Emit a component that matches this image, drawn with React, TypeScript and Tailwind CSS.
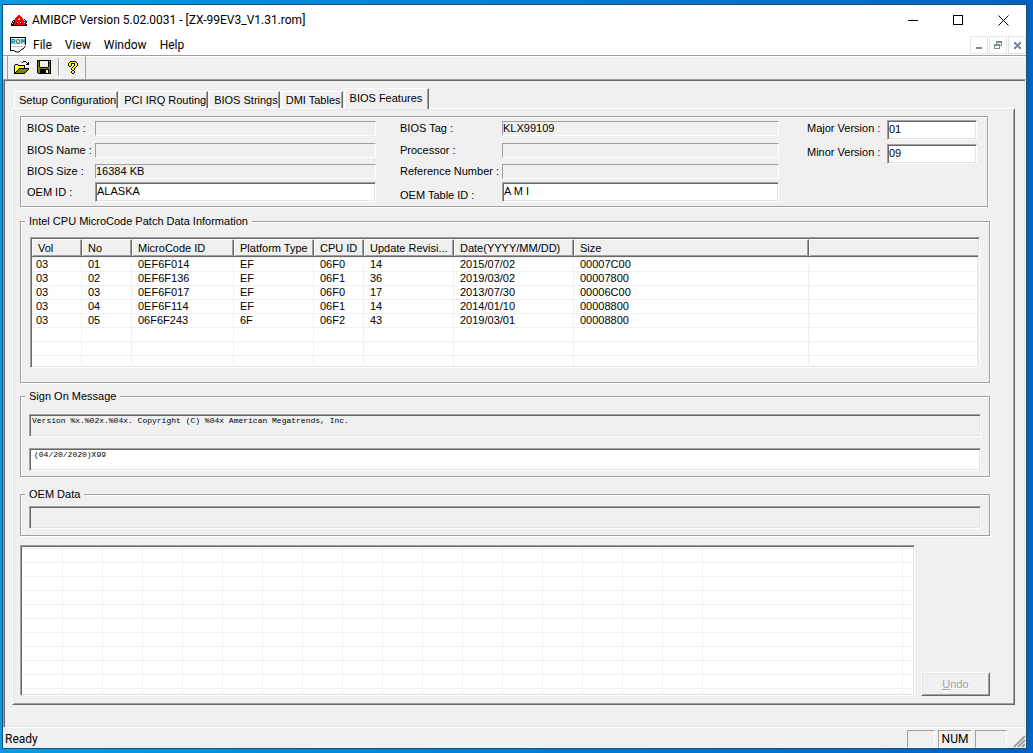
import { useState, type ReactNode } from "react";
import clsx from "clsx";

const sunken =
  "border border-t-[#a0a0a0] border-l-[#a0a0a0] border-r-white border-b-white shadow-[inset_1px_1px_0_#696969,inset_-1px_-1px_0_#e3e3e3]";
const thin =
  "border border-t-[#a0a0a0] border-l-[#a0a0a0] border-r-white border-b-white";
const etched =
  "border border-[#a0a0a0] shadow-[inset_1px_1px_0_#fff,1px_1px_0_#fff]";

const tabs = [
  "Setup Configuration",
  "PCI IRQ Routing",
  "BIOS Strings",
  "DMI Tables",
  "BIOS Features",
];

const columns = [
  { name: "Vol", width: "w-[50px]" },
  { name: "No", width: "w-[50px]" },
  { name: "MicroCode ID", width: "w-[102px]" },
  { name: "Platform Type", width: "w-[80px]" },
  { name: "CPU ID", width: "w-[50px]" },
  { name: "Update Revisi...", width: "w-[90px]" },
  { name: "Date(YYYY/MM/DD)", width: "w-[120px]" },
  { name: "Size", width: "w-[235px]" },
];

const patches = [
  ["03", "01", "0EF6F014", "EF", "06F0", "14", "2015/07/02", "00007C00"],
  ["03", "02", "0EF6F136", "EF", "06F1", "36", "2019/03/02", "00007800"],
  ["03", "03", "0EF6F017", "EF", "06F0", "17", "2013/07/30", "00006C00"],
  ["03", "04", "0EF6F114", "EF", "06F1", "14", "2014/01/10", "00008800"],
  ["03", "05", "06F6F243", "6F", "06F2", "43", "2019/03/01", "00008800"],
];

const palette: Record<string, string> = {
  "#": "#000000",
  O: "#808000",
  Y: "#ffff00",
  W: "#ffffff",
  R: "#ff0000",
  G: "#808080",
  B: "#7a8a99",
};

const openIcon = [
  ".........###....",
  "........#...#.#.",
  ".............##.",
  ".###........###.",
  "#YWY#######.....",
  "#WYWYWYWYW#.....",
  "#YWYWYWYWY#.....",
  "#WYWY##########.",
  "#YWY#OOOOOOOOO#.",
  "#WY#OOOOOOOOO#..",
  "#Y#OOOOOOOOO#...",
  "##OOOOOOOOO#....",
  "###########.....",
];

const saveIcon = [
  "##############",
  "#O#........#.#",
  "#O#........###",
  "#O#........#O#",
  "#O#........#O#",
  "#O#........#O#",
  "#O#........#O#",
  "#OO########OO#",
  "#OOOOOOOOOOOO#",
  "#OO#########O#",
  "#OO######..#O#",
  "#OO######..#O#",
  "#OO######..#O#",
  ".#############",
];

const helpIcon = [
  "..######..",
  ".#YYYYYY#.",
  "#YY####YY#",
  "#YY#..#YY#",
  "#YY#..#YY#",
  ".##..#YY#.",
  "....#YY#..",
  "...#YY#...",
  "...#YY#...",
  "....##....",
  "...#YY#...",
  "...#YY#...",
  "....##....",
];

const logoIcon = [
  ".......RR.......",
  "......RRRR......",
  ".....RRRRRR.....",
  "....RRRR.RRR....",
  "....RRR..RRR.#..",
  "..##RRRRRRRRR.#.",
  ".#.#RR#RR#RRR#G#",
  ".##RRR.RR.RRR.##",
  "#.#RR#RRRR#RRR#.",
  "###RRRRRRRRRRR##",
  "################",
];

const restoreIcon = [
  "..BBBBBB",
  "..BBBBBB",
  "..B....B",
  "BBBBBB.B",
  "BBBBBBBB",
  "B....B..",
  "B....B..",
  "BBBBBB..",
];

const closeIcon = [
  "BB...BB",
  "BBB.BBB",
  ".BBBBB.",
  "..BBB..",
  ".BBBBB.",
  "BBB.BBB",
  "BB...BB",
];

function Sprite({ rows }: { rows: string[] }) {
  const w = rows[0].length;
  return (
    <svg
      width={w}
      height={rows.length}
      viewBox={`0 0 ${w} ${rows.length}`}
      shapeRendering="crispEdges"
      aria-hidden="true"
      className="block shrink-0"
    >
      {rows.flatMap((row, y) =>
        row
          .split("")
          .map((c, x) =>
            palette[c] ? (
              <rect key={`${x}-${y}`} x={x} y={y} width={1} height={1} fill={palette[c]} />
            ) : null,
          ),
      )}
    </svg>
  );
}

function RomIcon() {
  return (
    <svg width="16" height="16" viewBox="0 0 16 16" aria-hidden="true" className="block shrink-0">
      <path d="M.5 14V.5h15V10l-5 5H6l-2-2H.5" fill="#fff" />
      <path d="M.5 14V.5h15V8" fill="none" stroke="#000" shapeRendering="crispEdges" />
      <text
        x="8"
        y="7"
        textAnchor="middle"
        fontFamily="Liberation Mono, monospace"
        fontWeight="bold"
        fontSize="8"
        fill="#008080"
      >
        ROM
      </text>
      <path d="M2 9.5h11" stroke="#c0c0c0" shapeRendering="crispEdges" />
      <path d="M1 13.5h3l2 1.500h3l3-3h1l2.500-3" fill="none" stroke="#000" />
    </svg>
  );
}

type FieldProps = {
  id: string;
  label: string;
  value?: string;
  editable?: boolean;
  rowClass: string;
  labelClass: string;
};

function Field({ id, label, value = "", editable, rowClass, labelClass }: FieldProps) {
  return (
    <div className={clsx("flex", rowClass)}>
      <label htmlFor={id} className={clsx("shrink-0 leading-4 whitespace-nowrap", labelClass)}>
        {label}
      </label>
      <input
        id={id}
        defaultValue={value}
        readOnly={!editable}
        className={clsx(
          "min-w-0 flex-1 outline-none",
          editable ? `h-5 bg-white px-px pb-0.5 ${sunken}` : `h-[15px] bg-transparent ${thin}`,
        )}
      />
    </div>
  );
}

function Group({
  title,
  className,
  children,
}: {
  title: string;
  className: string;
  children: ReactNode;
}) {
  return (
    <fieldset className={clsx("min-w-0 px-2", etched, className)}>
      <legend className="-ml-1 bg-[#f0f0f0] px-1 leading-4">{title}</legend>
      {children}
    </fieldset>
  );
}

function PatchTable() {
  const cell = "overflow-hidden border-r border-b border-[#f0f0f0] p-0 text-left";
  return (
    <div className={clsx("mr-px ml-px h-[131px] overflow-hidden bg-white p-px", sunken)}>
      <table className="w-full table-fixed border-separate border-spacing-0">
        <thead>
          <tr className="h-[18px] bg-[#f0f0f0] leading-4">
            {columns.map((col) => (
              <th
                key={col.name}
                className={clsx(
                  "overflow-hidden border-t border-r border-b border-t-white border-r-[#696969] border-b-[#696969] p-0 pl-1.5 text-left font-normal whitespace-nowrap shadow-[inset_1px_0_0_#fff,inset_-1px_-1px_0_#a0a0a0]",
                  col.width,
                )}
              >
                {col.name}
              </th>
            ))}
            <th className="border-t border-b border-t-white border-b-[#696969] p-0 shadow-[inset_1px_0_0_#fff,inset_0_-1px_0_#a0a0a0]" />
          </tr>
        </thead>
        <tbody>
          <tr className="h-px bg-[#f0f0f0]">
            <td colSpan={9} className="p-0" />
          </tr>
          {patches.map((patch) => (
            <tr key={patch[1]} className="h-3.5 leading-[13px]">
              {patch.map((text, i) => (
                <td key={i} className={clsx(cell, i > 0 ? "pl-1.5" : "pl-1")}>
                  {text}
                </td>
              ))}
              <td className={cell} />
            </tr>
          ))}
          {[0, 1, 2].map((n) => (
            <tr key={n} className="h-3.5">
              {Array.from({ length: 9 }, (_, i) => (
                <td key={i} className={cell} />
              ))}
            </tr>
          ))}
        </tbody>
      </table>
    </div>
  );
}

function HexGrid() {
  return (
    <div className={clsx("h-[151px] min-w-0 flex-1 overflow-hidden bg-white p-px", sunken)}>
      <table className="w-full table-fixed border-separate border-spacing-0">
        <tbody>
          {Array.from({ length: 12 }, (_, row) => (
            <tr key={row} className={row === 0 ? "h-0.5" : "h-3.5"}>
              {Array.from({ length: 19 }, (_, i) => (
                <td
                  key={i}
                  className={clsx(
                    "border-b border-[#f0f0f0] p-0",
                    i < 18 && "border-r",
                    i === 0 && "w-[41px]",
                    i > 0 && i < 17 && "w-10",
                    i === 17 && "w-[200px]",
                  )}
                />
              ))}
            </tr>
          ))}
        </tbody>
      </table>
    </div>
  );
}

export default function App() {
  const [active, setActive] = useState("BIOS Features");

  return (
    <div className="flex min-h-screen bg-linear-to-r from-[#0a9be2] to-[#0062c4] pt-1 pr-1.5 pb-1 pl-0.5 font-[Roboto,sans-serif] text-[12px] text-black select-none">
      <div className="flex min-w-0 flex-1 flex-col border border-[#1c4f78] bg-[#f0f0f0]">
        {/* Title bar */}
        <header className="flex h-[30px] items-center bg-white pl-2">
          <Sprite rows={logoIcon} />
          <h1 className="ml-[5px] flex-1 truncate">
            AMIBCP Version 5.02.0031 - [ZX-99EV3_V1.31.rom]
          </h1>
          <button aria-label="Minimize" className="flex h-full w-[45px] items-center justify-center">
            <span className="h-px w-2.5 bg-black" />
          </button>
          <button aria-label="Maximize" className="flex h-full w-[46px] items-center justify-center">
            <span className="h-2.5 w-2.5 border border-black" />
          </button>
          <button aria-label="Close" className="flex h-full w-[45px] items-center justify-center">
            <svg width="11" height="11" viewBox="0 0 11 11" stroke="#000" aria-hidden="true">
              <path d="M.5.5l10 10M10.5.5l-10 10" />
            </svg>
          </button>
        </header>

        {/* Menu bar */}
        <nav className="flex h-5 items-center bg-white pl-[7px]">
          <RomIcon />
          <div className="ml-[7px] flex flex-1 gap-[13px]">
            <button>File</button>
            <button>View</button>
            <button>Window</button>
            <button>Help</button>
          </div>
          <div className="flex gap-px">
            <button
              aria-label="Minimize document"
              className="flex h-[18px] w-[18px] items-end justify-center border border-[#e3e3e3] pb-1"
            >
              <span className="h-0.5 w-1.5 bg-[#7a8a99]" />
            </button>
            <button
              aria-label="Restore document"
              className="flex h-[18px] w-[18px] items-center justify-center border border-[#e3e3e3]"
            >
              <Sprite rows={restoreIcon} />
            </button>
            <button
              aria-label="Close document"
              className="flex h-[18px] w-[18px] items-center justify-center border border-[#e3e3e3]"
            >
              <Sprite rows={closeIcon} />
            </button>
          </div>
        </nav>

        {/* Toolbar */}
        <div className="flex h-6 border-t border-[#a0a0a0] pl-1 shadow-[inset_0_1px_0_#fff]">
          <div className="flex items-center border-x border-[#a0a0a0] pr-[7px] pb-px pl-1.5">
            <button aria-label="Open">
              <Sprite rows={openIcon} />
            </button>
            <button aria-label="Save" className="ml-[7px]">
              <Sprite rows={saveIcon} />
            </button>
            <span className="ml-[7px] h-[18px] w-0.5 border-l border-[#a0a0a0] bg-white" />
            <button aria-label="Help" className="ml-2">
              <Sprite rows={helpIcon} />
            </button>
          </div>
        </div>

        {/* Document area */}
        <main className="flex-1 border border-t-[#a0a0a0] border-r-white border-b-white border-l-[#a0a0a0] pt-[9px] pr-2.5 pb-5 pl-2 font-['Liberation_Sans',Arial,sans-serif] text-[11px] shadow-[inset_1px_1px_0_#696969,inset_-1px_-1px_0_#e3e3e3]">
          <div role="tablist" className="flex h-[19px] items-end pl-0.5">
            {tabs.map((tab) => (
              <button
                key={tab}
                role="tab"
                aria-selected={tab === active}
                onClick={() => setActive(tab)}
                className={clsx(
                  "border-t border-r border-l border-t-white border-r-[#696969] border-l-white bg-[#f0f0f0] whitespace-nowrap shadow-[inset_-1px_0_0_#a0a0a0]",
                  tab === active
                    ? "relative z-10 -mb-px h-[21px] pr-1.5 pb-0.5 pl-[5px]"
                    : "mr-px h-[17px] pr-px pl-1",
                )}
              >
                {tab}
              </button>
            ))}
          </div>

          <div
            role="tabpanel"
            className="border border-t-white border-r-[#696969] border-b-[#696969] border-l-white pt-[7px] pr-6 pb-2 pl-[7px] shadow-[inset_1px_1px_0_#e3e3e3,inset_-1px_-1px_0_#a0a0a0]"
          >
            <div
              className={clsx(
                "mr-0.5 grid grid-cols-[349fr_379fr_174px] gap-x-6 pr-2.5 pb-[3px] pl-1.5",
                etched,
              )}
            >
              <div>
                <Field id="date" label="BIOS Date :" rowClass="h-[22px] items-center" labelClass="w-[68px]" />
                <Field id="name" label="BIOS Name :" rowClass="h-[22px] items-center" labelClass="w-[68px]" />
                <Field id="size" label="BIOS Size :" value="16384 KB" rowClass="h-5 items-center" labelClass="w-[68px]" />
                <Field id="oem" label="OEM ID :" value="ALASKA" editable rowClass="h-[22px] items-center" labelClass="w-[68px]" />
              </div>
              <div>
                <Field id="tag" label="BIOS Tag :" value="KLX99109" rowClass="h-[22px] items-center" labelClass="w-[102px]" />
                <Field id="cpu" label="Processor :" rowClass="h-[22px] items-center" labelClass="w-[102px]" />
                <Field id="ref" label="Reference Number :" rowClass="h-5 items-center" labelClass="w-[102px]" />
                <Field id="table" label="OEM Table ID :" value="A M I" editable rowClass="h-[22px] items-center" labelClass="w-[102px] self-end" />
              </div>
              <div className="flex flex-col gap-1 pt-[3px] pl-1">
                <Field id="major" label="Major Version :" value="01" editable rowClass="items-start" labelClass="w-20" />
                <Field id="minor" label="Minor Version :" value="09" editable rowClass="items-start" labelClass="w-20" />
              </div>
            </div>

            <Group title="Intel CPU MicroCode Patch Data Information" className="mt-1.5 pt-2 pb-3.5">
              <PatchTable />
            </Group>

            <Group title="Sign On Message" className="mt-[5px] pt-2.5 pb-[5px]">
              <input
                aria-label="Version message"
                readOnly
                defaultValue="Version %x.%02x.%04x. Copyright (C) %04x American Megatrends, Inc."
                className={clsx(
                  "block h-[23px] w-full bg-transparent px-0.5 pb-2.5 font-['Liberation_Mono',monospace] text-[8px] outline-none",
                  sunken,
                )}
              />
              <input
                aria-label="Sign on message"
                defaultValue="(04/20/2020)X99"
                className={clsx(
                  "mt-[11px] block h-[23px] w-full bg-white px-1 pb-2.5 font-['Liberation_Mono',monospace] text-[8px] outline-none",
                  sunken,
                )}
              />
            </Group>

            <Group title="OEM Data" className="mt-[9px] pt-1 pb-1.5">
              <input
                aria-label="OEM data"
                readOnly
                className={clsx("block h-[23px] w-full bg-transparent px-1 outline-none", sunken)}
              />
            </Group>

            <div className="mt-[9px] flex items-end gap-1.5">
              <HexGrid />
              <button
                disabled
                className="h-6 w-[69px] border border-t-white border-r-[#696969] border-b-[#696969] border-l-white text-[#a0a0a0] shadow-[inset_1px_1px_0_#e3e3e3,inset_-1px_-1px_0_#a0a0a0] text-shadow-[1px_1px_0_#fff]"
              >
                <span className="underline">U</span>ndo
              </button>
            </div>
          </div>
        </main>

        {/* Status bar */}
        <footer className="flex h-5 items-end pl-0.5">
          <span className="flex-1">Ready</span>
          <div className="flex h-[18px] items-center gap-[3px]">
            <span className={clsx("h-full w-7", thin)} />
            <span className={clsx("flex h-full w-[34px] items-center justify-center", thin)}>
              NUM
            </span>
            <span className={clsx("h-full w-8", thin)} />
          </div>
          <svg width="19" height="18" viewBox="0 0 19 18" stroke="#a0a0a0" aria-hidden="true">
            <path d="M7 17L18 6M11 17l7-7M15 17l3-3" strokeWidth="2" />
          </svg>
        </footer>
      </div>
    </div>
  );
}
